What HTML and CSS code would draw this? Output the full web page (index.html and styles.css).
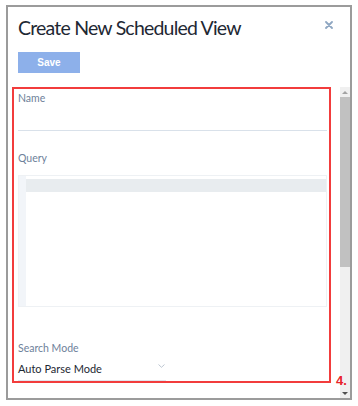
FILE: index.html
```html
<!DOCTYPE html>
<html lang="en">
<head>
    <meta charset="UTF-8">
    <meta name="viewport" content="width=device-width, initial-scale=1.0">
    <title>Create New Scheduled View</title>
    <link rel="stylesheet" href="styles.css">
</head>
<body>

<div class="dialog">
    <!-- Cabeçalho -->
    <div class="dialog-head">
        <h1 class="dialog-title">Create New Scheduled View</h1>
        <span class="close">
            <svg width="8" height="8" viewBox="0 0 8 8"><path d="M1 1L7 7M7 1L1 7" stroke="#8fa7c2" stroke-width="1.8" stroke-linecap="round"/></svg>
        </span>
    </div>

    <div class="dialog-actions">
        <button class="btn-save">Save</button>
    </div>

    <!-- Corpo com rolagem -->
    <div class="dialog-body">
        <div class="form-area">
            <div class="form">
                <label class="field-label">Name</label>
                <div class="text-input"></div>

                <label class="field-label query-label">Query</label>
                <div class="editor">
                    <div class="gutter"></div>
                    <div class="code">
                        <div class="active-line"></div>
                    </div>
                </div>

                <label class="field-label mode-label">Search Mode</label>
                <div class="select">
                    <span>Auto Parse Mode</span>
                    <svg width="7" height="4" viewBox="0 0 7 4"><path d="M0.5 0.5L3.5 3.3L6.5 0.5" fill="none" stroke="#b5c0cd" stroke-width="0.9"/></svg>
                </div>
            </div>
            <span class="marker">4.</span>
        </div>

        <div class="scrollbar">
            <div class="sb-btn"><span class="arrow-up"></span></div>
            <div class="sb-thumb"></div>
            <div class="sb-track"></div>
            <div class="sb-btn"><span class="arrow-down"></span></div>
        </div>
    </div>
</div>

</body>
</html>
```

FILE: styles.css
```css
body {
    margin: 0;
    background: #ffffff;
    font-family: Lato, "Open Sans", sans-serif;
}

.dialog {
    box-sizing: border-box;
    width: 346px;
    height: 395px;
    margin: 5px 0 0 6px;
    border: 2px solid #9b9b9b;
    display: flex;
    flex-direction: column;
}

.dialog-head {
    display: flex;
    justify-content: space-between;
    padding: 9px 17px 0 10px;
}

.dialog-title {
    margin: 0;
    font-size: 19.5px;
    line-height: 24px;
    font-weight: 400;
    letter-spacing: -0.8px;
    color: #1e2833;
}

.close {
    display: block;
    width: 8px;
    height: 8px;
    margin-top: 5px;
}

.close svg {
    display: block;
}

.dialog-actions {
    padding: 12px 0 0 10px;
}

.btn-save {
    display: block;
    width: 62px;
    height: 21px;
    border: none;
    padding: 0;
    background-color: #8db0ea;
    color: #ffffff;
    font-family: "Liberation Sans", Arial, sans-serif;
    font-size: 10px;
    font-weight: bold;
}

/* Área do formulário */
.dialog-body {
    flex: 1;
    display: flex;
    margin-top: 14px;
}

.form-area {
    flex: 1;
    position: relative;
    padding-left: 4px;
}

.form {
    box-sizing: border-box;
    width: 319px;
    height: 296px;
    border: 2px solid #f23c3c;
    padding: 3px 2px 0 4px;
}

.field-label {
    display: block;
    font-size: 10.5px;
    line-height: 12px;
    color: #6e819a;
}

.text-input {
    height: 26px;
    border-bottom: 1px solid #d9e1ea;
}

.query-label {
    margin-top: 21px;
}

.editor {
    box-sizing: border-box;
    height: 132px;
    margin-top: 11px;
    border: 1px solid #eef1f4;
    display: flex;
}

.gutter {
    width: 7px;
    background-color: #f2f5f9;
}

.code {
    flex: 1;
    padding-top: 3px;
}

.active-line {
    height: 13px;
    background-color: #e8ecef;
}

.mode-label {
    margin-top: 35px;
}

.select {
    width: 148px;
    margin-top: 7px;
    padding-bottom: 3px;
    border-bottom: 1px solid #dfe6ee;
    display: flex;
    justify-content: space-between;
    align-items: center;
    font-size: 11px;
    line-height: 16px;
    color: #1e2833;
}

.select svg {
    margin: -6px 1px 0 0;
}

/* Marcador da anotação */
.marker {
    position: absolute;
    left: 328px;
    top: 287px;
    font-family: "Liberation Sans", Arial, sans-serif;
    font-size: 13px;
    line-height: 13px;
    font-weight: bold;
    color: #e8232a;
}

/* Barra de rolagem */
.scrollbar {
    width: 10px;
    display: flex;
    flex-direction: column;
    background-color: #f0f0f0;
}

.sb-btn {
    height: 10px;
    display: flex;
    align-items: center;
    justify-content: center;
}

.arrow-up {
    border-left: 3px solid transparent;
    border-right: 3px solid transparent;
    border-bottom: 3px solid #a3a3a3;
}

.arrow-down {
    border-left: 3px solid transparent;
    border-right: 3px solid transparent;
    border-top: 3px solid #505050;
}

.sb-thumb {
    height: 170px;
    background-color: #c1c1c1;
}

.sb-track {
    flex: 1;
}
```
